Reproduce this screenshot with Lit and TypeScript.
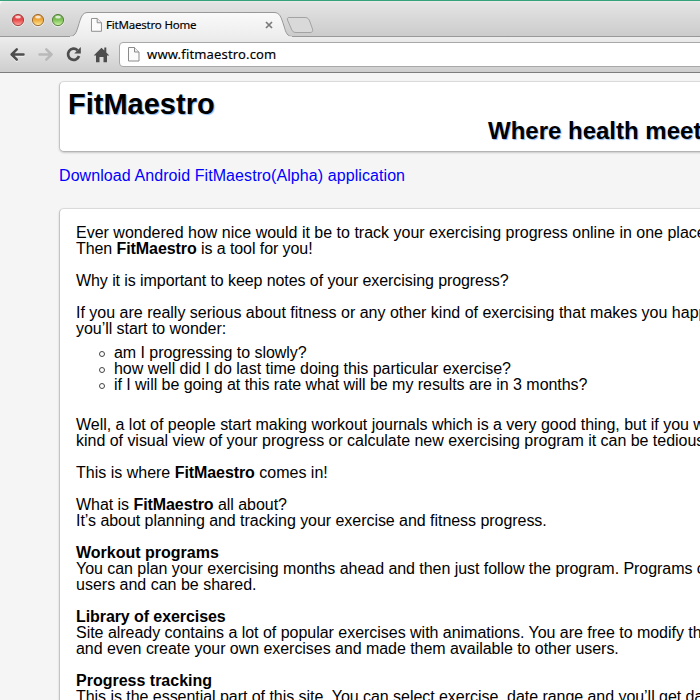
import { LitElement, html, css, svg } from "lit";
import { customElement } from "lit/decorators.js";

const pageIcon = svg`
  <path d="M.5 .5H6.500L11 5V14H.5Z" fill="#fbfbfb" stroke="#8b8b8b"/>
  <path d="M6.500 .5V5H11" fill="#eee" stroke="#8b8b8b"/>`;

@customElement("browser-frame")
class BrowserFrame extends LitElement {
  static styles = css`
    :host { display: block; font-family: "Noto Sans", "Open Sans", sans-serif; color: #000; }
    .strip {
      box-sizing: border-box; height: 37px; position: relative;
      border-top: 1px solid #35a27b;
      background: linear-gradient(#ececec 0, #e3e3e3 2px, #cbcbcb 100%);
    }
    .shape { position: absolute; left: 0; top: -1px; display: block; }
    .label {
      position: absolute; left: 106px; top: 16px; line-height: 16px;
      font-size: 11.5px; white-space: nowrap; letter-spacing: -0.2px; -webkit-text-stroke: .15px #000;
    }
    .toolbar {
      box-sizing: border-box; height: 36px; display: flex; align-items: flex-start;
      background: linear-gradient(#ededed, #cecece);
      border-bottom: 1px solid #7d7d7d; overflow: hidden;
    }
    .nav { flex: none; width: 119px; height: 35px; }
    .field {
      box-sizing: border-box; flex: none; width: 620px; height: 25px; margin-top: 5px;
      background: #fff; border: 1px solid #a8a8a8; border-radius: 4px;
      display: flex; align-items: center; padding-left: 8px; gap: 7px;
      font-size: 13px; line-height: 18px; white-space: nowrap;
    }
    .url { letter-spacing: .16px; padding-bottom: 1px; -webkit-text-stroke: .15px #000; }
  `;
  render() {
    return html`
      <div class="strip">
        <svg class="shape" width="700" height="37" viewBox="0 0 700 37">
          <defs>
            <linearGradient id="tab" x2="0" y2="1"><stop stop-color="#fafafa"/><stop offset="1" stop-color="#ededed"/></linearGradient>
            <linearGradient id="r" x2="0" y2="1"><stop stop-color="#e04545"/><stop offset=".5" stop-color="#e94b4b"/><stop offset="1" stop-color="#ffaaa5"/></linearGradient>
            <linearGradient id="y" x2="0" y2="1"><stop stop-color="#d98e2c"/><stop offset=".5" stop-color="#efa93c"/><stop offset="1" stop-color="#ffec9a"/></linearGradient>
            <linearGradient id="g" x2="0" y2="1"><stop stop-color="#6aa545"/><stop offset=".5" stop-color="#80c25a"/><stop offset="1" stop-color="#cff5a5"/></linearGradient>
          </defs>
          <path d="M0 1H5Q1 1 0 5Z" fill="#f6f6f6"/>
          <path d="M0 36.5H69C75 36.5 76 33 78 27C81 17 82 12.5 88 12.5H274C280 12.5 281 17 284 26C286 33 287 36.5 293 36.5H700V38H0Z" fill="url(#tab)" stroke="#989898"/>
          <path d="M70 37H292" stroke="#ededed" stroke-width="1.4"/>
          <path d="M289 17.5H305C308 17.5 309 19 310 22L312.500 29C313.300 31.500 312 32.500 310 32.500H296C293 32.500 292 31 291 28L287.500 20C287 18.500 287.500 17.500 289 17.500Z" fill="#d9d9d9" stroke="#a3a3a3"/>
          ${[["r", 18, "#9c3a35"], ["y", 38, "#96632a"], ["g", 58, "#4c7a37"]].map(([id, x, edge]) => svg`
            <circle cx=${x} cy="20.800" r="6" fill="none" stroke="#f4f4f4" stroke-opacity=".7"/>
            <circle cx=${x} cy="20" r="5.600" fill="url(#${id})" stroke=${edge} stroke-width=".9"/>
            <ellipse cx=${x} cy="17" rx="2.900" ry="1.500" fill="#fff" opacity=".75"/>`)}
          <g transform="translate(91 18) scale(.95 .95)">${pageIcon}</g>
          <path d="M266 22L272 28M272 22L266 28" stroke="#7b7b7b" stroke-width="1.700"/>
        </svg>
        <span class="label">FitMaestro Home</span>
      </div>
      <div class="toolbar">
        <svg class="nav" viewBox="0 37 119 35" fill="none">
          <g stroke-width="2.500" stroke-linecap="round" stroke-linejoin="round">
            <path d="M23.500 55.500H12.500M16.800 50.300L11.600 55.500L16.800 60.700" stroke="#f2f2f2"/>
            <path d="M23.500 54.500H12.500M16.800 49.300L11.600 54.500L16.800 59.700" stroke="#4d4d4d"/>
            <path d="M39.500 54.500H51M46.300 49.300L51.500 54.500L46.300 59.700" stroke="#b9b9b9"/>
          </g>
          <path d="M77.500 50.200A5.600 5.600 0 1 0 79 56" stroke="#4d4d4d" stroke-width="2.700"/>
          <path d="M80.800 47V53.500H74.300Z" fill="#4d4d4d"/>
          <path d="M101.500 47.800L104.300 50.600V47.500H106.300V52.600L109.300 55.500H107V62.200H103.500V57H99.500V62.200H96V55.500H93.700Z" fill="#4d4d4d"/>
        </svg>
        <div class="field">
          <svg width="12" height="15" viewBox="0 0 12 15">${pageIcon}</svg>
          <span class="url">www.fitmaestro.com</span>
        </div>
      </div>`;
  }
}

@customElement("app-root")
class AppRoot extends LitElement {
  static styles = css`
    :host {
      display: block; width: 700px; height: 700px; overflow: hidden; background: #f5f5f5;
      font: 16px/16px "Liberation Sans", Arial, sans-serif; color: #000;
    }
    .page { margin-left: 59px; padding-top: 8px; width: 860px; white-space: nowrap; }
    .card {
      box-sizing: border-box; background: #fff; border: 1px solid #ccc; border-color: #dadada #bbb #b4b4b4 #c4c4c4;
      border-radius: 5px; box-shadow: 0 1px 2px rgba(0, 0, 0, .18);
    }
    .head { height: 71px; padding: 6px 8px; }
    h1, h2 { margin: 0; text-shadow: 1px 1px 1px #8fbcf0; }
    h1 { font-size: 29px; line-height: 32px; }
    h2 { font-size: 24px; line-height: 24px; margin: -1px 0 0 420px; }
    .link { display: block; margin: 16px 0 24px; color: #00f; text-decoration: none; letter-spacing: .08px; }
    .body { height: 700px; padding: 16px; }
    .near { letter-spacing: -.025px; }
    .snug { letter-spacing: -.045px; }
    .tight { letter-spacing: -.08px; }
    b { letter-spacing: -.08px; }
    .term { letter-spacing: 0; }
    p { margin: 0 0 16px; }
    ul { list-style: none; margin: -8px 0 24px; padding: 0; }
    li { display: flex; align-items: center; padding-left: 23px; gap: 9px; }
    li::before { content: ""; box-sizing: border-box; width: 6px; height: 6px; border: 1px solid #444; border-radius: 50%; position: relative; top: 1px; }
  `;
  render() {
    const fm = html`<b>FitMaestro</b>`;
    return html`
      <browser-frame></browser-frame>
      <main class="page">
        <header class="card head"><h1>FitMaestro</h1><h2>Where health meets technology</h2></header>
        <a class="link">Download Android FitMaestro(Alpha) application</a>
        <section class="card body">
          <p>Ever wondered how nice would it be to track your exercising progress online in one place?<br><span class="tight">Then ${fm} is a tool for you!</span></p>
          <p class="tight">Why it is important to keep notes of your exercising progress?</p>
          <p>If you are really serious about fitness or any other kind of exercising that makes you happy,<br><span class="snug">you’ll start to wonder:</span></p>
          <ul>
            <li class="snug">am I progressing to slowly?</li>
            <li class="near">how well did I do last time doing this particular exercise?</li>
            <li class="snug">if I will be going at this rate what will be my results are in 3 months?</li>
          </ul>
          <p class="near">Well, a lot of people start making workout journals which is a very good thing, but if you want<br>kind of visual view of your progress or calculate new exercising program it can be tedious.</p>
          <p>This is where ${fm} comes in!</p>
          <p class="snug">What is ${fm} all about?<br>It’s about planning and tracking your exercise and fitness progress.</p>
          <p><b class="term">Workout programs</b><br><span class="snug">You can plan your exercising months ahead and then just follow the program. Programs can</span><br>users and can be shared.</p>
          <p><b>Library of exercises</b><br><span class="near">Site already contains a lot of popular exercises with animations. You are free to modify them</span><br><span class="snug">and even create your own exercises and made them available to other users.</span></p>
          <p><b class="term">Progress tracking</b><br><span class="snug">This is the essential part of this site. You can select exercise, date range and you’ll get data</span></p>
        </section>
      </main>`;
  }
}
